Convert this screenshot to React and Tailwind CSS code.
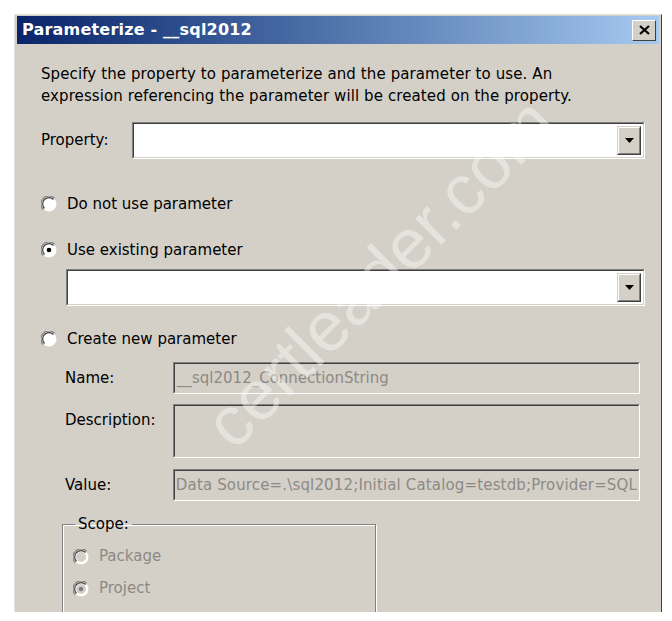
import React from 'react'

const FONT = { fontFamily: '"DejaVu Sans", Verdana, sans-serif' }

function Sunken({ className = '', inner = '', children }) {
  return (
    <div className={`border border-t-[#808080] border-l-[#808080] border-b-white border-r-white ${className}`}>
      <div className={`h-full border border-t-[#404040] border-l-[#404040] border-b-[#d4d0c8] border-r-[#d4d0c8] ${inner}`}>
        {children}
      </div>
    </div>
  )
}

function DropButton() {
  return (
    <div className="h-full w-[24px] border border-t-[#d4d0c8] border-l-[#d4d0c8] border-b-[#404040] border-r-[#404040] bg-[#d4d0c8]">
      <div className="h-full border border-t-white border-l-white border-b-[#808080] border-r-[#808080] flex items-center justify-center">
        <svg width="9" height="5" viewBox="0 0 9 5">
          <path d="M0 0h9L4.5 5z" fill="#000" />
        </svg>
      </div>
    </div>
  )
}

function Combo({ className = '' }) {
  return (
    <Sunken className={`h-[37px] ${className}`} inner="bg-white flex justify-end p-[2px]">
      <DropButton />
    </Sunken>
  )
}

function Radio({ checked, disabled }) {
  const fill = disabled ? '#d4d0c8' : '#fff'
  const dot = disabled ? '#808080' : '#000'
  return (
    <svg width="16" height="16" viewBox="0 0 16 16" className="shrink-0">
      <circle cx="8" cy="8" r="7.5" fill="#fff" />
      <path d="M13.7 2.3A7 7 0 0 0 2.3 13.7" fill="none" stroke="#808080" strokeWidth="1.2" />
      <path d="M12.5 3.5A5.6 5.6 0 0 0 3.5 12.5" fill="none" stroke="#404040" strokeWidth="1.2" />
      <circle cx="8" cy="8" r="5" fill={fill} />
      {checked && <circle cx="8" cy="8" r="2.3" fill={dot} />}
    </svg>
  )
}

function RadioRow({ label, checked, disabled, className = '' }) {
  return (
    <div className={`flex items-center h-[22px] ${className}`}>
      <Radio checked={checked} disabled={disabled} />
      <span className={`ml-[10px] ${disabled ? 'text-[#8d8a85]' : 'text-black'}`}>{label}</span>
    </div>
  )
}

export default function App() {
  return (
    <div className="relative w-[672px] h-[621px] bg-white overflow-hidden" style={FONT}>
      <div className="ml-[14px] mt-[14px] w-[648px] h-[598px] overflow-hidden bg-[#d4d0c8] border border-l-[#e6e4df] border-t-[#e6e4df] border-r-[#404040] border-b-0 text-[15px] text-black">
        {/* title bar */}
        <div className="mx-[2px] mt-[1px] h-[28px] bg-gradient-to-r from-[#0a246a] to-[#a6caf0] flex items-center pl-[5px] pr-[3px]">
          <span className="flex-1 text-white font-bold text-[16px] tracking-[0.2px]">Parameterize - __sql2012</span>
          <div className="w-[24px] h-[21px] bg-[#d4d0c8] border border-t-white border-l-white border-b-[#404040] border-r-[#404040] flex items-center justify-center">
            <svg width="11" height="10" viewBox="0 0 11 10">
              <path d="M1 1l9 8M10 1l-9 8" stroke="#000" strokeWidth="2.2" />
            </svg>
          </div>
        </div>

        <div className="pl-[26px] pr-[16px] pt-[19px]">
          <p className="leading-[22px] tracking-[0.1px]">
            Specify the property to parameterize and the parameter to use. An
            <br />
            expression referencing the parameter will be created on the property.
          </p>

          <div className="mt-[15px] flex items-center">
            <span className="w-[91px]">Property:</span>
            <Combo className="flex-1" />
          </div>

          <RadioRow className="mt-[34px]" label="Do not use parameter" />
          <RadioRow className="mt-[24px]" label="Use existing parameter" checked />
          <Combo className="mt-[8px] ml-[25px]" />

          <RadioRow className="mt-[22px]" label="Create new parameter" />

          <div className="ml-[24px] mr-[5px]">
            <div className="mt-[12px] flex items-center">
              <span className="w-[108px]">Name:</span>
              <Sunken className="flex-1 h-[32px]" inner="flex items-center px-[2px] text-[#8d8a85] whitespace-nowrap overflow-hidden">
                __sql2012_ConnectionString
              </Sunken>
            </div>
            <div className="mt-[10px] flex items-start">
              <span className="w-[108px] pt-[5px]">Description:</span>
              <Sunken className="flex-1 h-[54px]" />
            </div>
            <div className="mt-[11px] flex items-center">
              <span className="w-[108px]">Value:</span>
              <Sunken className="flex-1 h-[32px]" inner="flex items-center px-[1px] text-[#8d8a85] whitespace-nowrap overflow-hidden tracking-[0.15px]">
                Data Source=.\sql2012;Initial Catalog=testdb;Provider=SQL
              </Sunken>
            </div>
          </div>

          <fieldset className="mt-[12px] ml-[21px] w-[314px] h-[120px] border border-[#808080] shadow-[inset_1px_1px_0_#fff,1px_1px_0_#fff] pl-[10px] pr-[12px]">
            <legend className="px-[3px] ml-[2px]">Scope:</legend>
            <RadioRow className="mt-[10px]" label="Package" disabled />
            <RadioRow className="mt-[10px]" label="Project" checked disabled />
          </fieldset>
        </div>
      </div>

      {/* watermark */}
      <div className="absolute left-[380px] top-[273px] pointer-events-none">
        <div
          className="-translate-x-1/2 -translate-y-1/2 -rotate-45 whitespace-nowrap text-[70px] text-white/40"
          style={{ fontFamily: '"Liberation Sans", Arial, sans-serif' }}
        >
          certleader.com
        </div>
      </div>
    </div>
  )
}
